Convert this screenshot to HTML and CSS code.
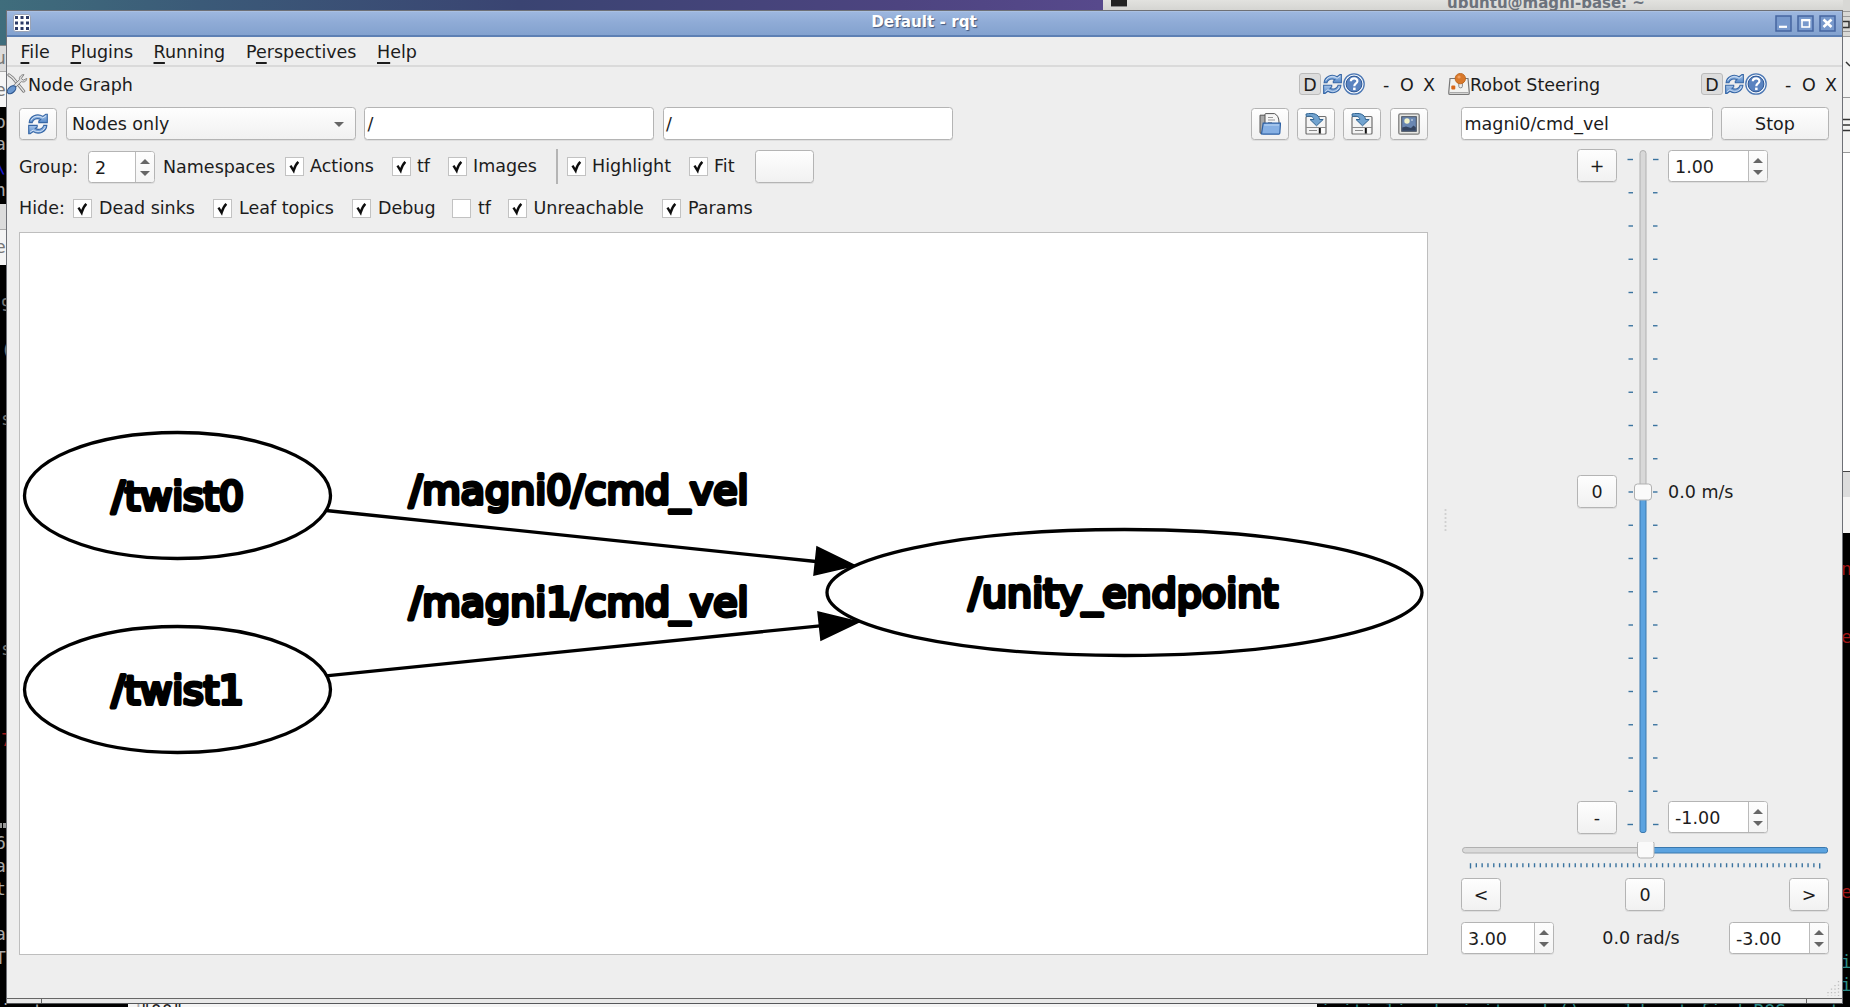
FILE: index.html
```html
<!DOCTYPE html>
<html lang="en">
<head>
<meta charset="utf-8">
<title>Default - rqt</title>
<link rel="stylesheet" href="styles.css">
</head>
<body>
<svg class="defs" width="0" height="0" aria-hidden="true">
  <defs>
    <linearGradient id="blue" x1="0" y1="0" x2="0" y2="1"><stop offset="0" stop-color="#a9c6ea"/><stop offset="1" stop-color="#5488c8"/></linearGradient>
    <symbol id="refresh" viewBox="0 0 22 22">
      <path d="M2.2 9.6C2.5 3.5 10 -.2 15.800 3.400L18.800 1.200 20.300 1.200 20.300 9.600 11.800 9.600 11.800 8 13.600 6.500C10.200 4.600 6 6.200 5.200 9.600Z" fill="url(#blue)" stroke="#3767a6" stroke-width="1.100"/>
      <path d="M19.800 12.400C19.500 18.500 12 22.200 6.200 18.600L3.200 20.800 1.700 20.800 1.700 12.400 10.200 12.400 10.200 14 8.400 15.500C11.800 17.400 16 15.800 16.800 12.400Z" fill="url(#blue)" stroke="#3767a6" stroke-width="1.100"/>
      <path d="M4 7.500C6.500 2.600 12 2.400 15.800 5L19 2.800M18 14.500C15.500 19.400 10 19.600 6.200 17L3 19.200" fill="none" stroke="#dfeaf8" stroke-width=".9"/>
    </symbol>
    <symbol id="help" viewBox="0 0 22 22">
      <circle cx="11" cy="11" r="10.200" fill="#f3f7fc" stroke="#4a76b3" stroke-width="1.300"/>
      <circle cx="11" cy="11" r="7.900" fill="#5a83c0" stroke="#2a5594" stroke-width="1"/>
      <path d="M7.800 8.300C7.900 4.400 14.600 4.500 14.400 8.200C14.300 10.500 11.300 10.500 11.300 13.200" fill="none" stroke="#fff" stroke-width="2.200"/>
      <rect x="10.100" y="14.600" width="2.500" height="2.500" fill="#fff"/>
    </symbol>
    <symbol id="tools" viewBox="0 0 22 22">
      <path d="M2 1.500L6 4.500 17.500 18.500" fill="none" stroke="#777" stroke-width="3.200" stroke-linecap="round"/>
      <path d="M2 1.500L6 4.500 17.500 18.500" fill="none" stroke="#e6e6e6" stroke-width="1.500" stroke-linecap="round"/>
      <path d="M17.800 1.200L15 5.200 17 7 20.700 5.200C20.500 8.500 17.500 9.500 15.200 8.500L8 15.500 5.800 13.300 13 6.500C12.500 3.500 15 1 17.800 1.200Z" fill="#dedede" stroke="#777" stroke-width=".9"/>
      <ellipse cx="4.800" cy="17" rx="5.200" ry="3.200" transform="rotate(-42 4.800 17)" fill="#6b98d0" stroke="#2e578f" stroke-width="1.100"/>
    </symbol>
    <symbol id="joystick" viewBox="0 0 22 22">
      <path d="M2 5.500H20L21.200 18.500V20.500Q21.200 21.400 20 21.400H2Q.8 21.400 .8 20.500V18.500Z" fill="#f2f2f0" stroke="#777" stroke-width="1.200"/>
      <path d="M1.500 19.500H20.500" stroke="#aaa"/>
      <rect x="10.800" y="9" width="3.600" height="5.800" rx="1.500" fill="#eee" stroke="#888"/>
      <circle cx="12.300" cy="5.600" r="5.200" fill="#d9792b" stroke="#b85c10" stroke-width=".8"/>
      <circle cx="11" cy="4" r="1.600" fill="#efa061"/>
      <rect x="3.300" y="12.400" width="4" height="4" rx="1" fill="#d9681a"/>
    </symbol>
    <symbol id="open" viewBox="0 0 22 22">
      <path d="M1 2.200H7L9 4V20.500H2Q1 20.500 1 19Z" fill="#a9a9a9" stroke="#555"/>
      <path d="M6 12V1.200Q6 .6 7 .6H15.500Q19.800 2.500 20 9V12Z" fill="#f7f7f7" stroke="#555"/>
      <path d="M9 4.500H14M9 7H16M9 9.500H13" stroke="#999"/>
      <path d="M4.200 10.200H21.500L20.800 20.300Q20.700 21.200 19.800 21.200H4.500L2.500 21Z" fill="#86b0e4" stroke="#2f62a5" stroke-width="1.200"/>
      <path d="M5.200 12H20" stroke="#bdd7f3"/>
    </symbol>
    <symbol id="save" viewBox="0 0 22 22">
      <path d="M1.500 3.500H20Q21 3.500 21 4.500V20Q21 21 20 21H2Q1 21 1 20V4.500Z" fill="#f4f4f4" stroke="#707070" stroke-width="1.200"/>
      <path d="M1 14.500H21M4 17.500H12" stroke="#8a8a8a"/>
      <path d="M14.800 15V20.500" stroke="#111" stroke-width="2"/>
      <path d="M16.500 15V20.500H19.500V15Z" fill="#fff"/>
      <path d="M1 1C8 -.6 14 1 14.500 6.500H18.200L11.500 12.800 5 6.500H8.800C8.500 3.500 5.500 2.700 1.300 3.500Z" fill="#72a3cf" stroke="#2f6391"/>
    </symbol>
    <symbol id="image" viewBox="0 0 22 22">
      <rect x=".8" y=".8" width="20.400" height="20.400" rx="1.500" fill="#e8e8e4" stroke="#7c7c7c" stroke-width="1.300"/>
      <rect x="3.700" y="3.700" width="14.600" height="14.600" fill="#6a87b2" stroke="#454e5b"/>
      <path d="M4.200 14.500L8 13.500 13 15 15.500 12.500 17.800 14.500V17.800H4.200Z" fill="#34445f"/>
      <circle cx="9" cy="8" r="2.700" fill="#f1f2c8"/>
      <circle cx="14" cy="7" r="1" fill="#b6c7da"/>
    </symbol>
    <symbol id="tick" viewBox="0 0 19 19">
      <path d="M5 8.600L8.500 14.300C9.500 10.500 11 7 13.800 4.300" fill="none" stroke="#0d0d0d" stroke-width="2.700"/>
    </symbol>
  </defs>
</svg>

<!-- Windows behind the main one -->
<div class="peek peek-title"><svg width="16" height="8" viewBox="0 0 16 8"><rect width="16" height="7" fill="#222"/><rect y="6" width="16" height="1" fill="#888"/></svg><span>ubuntu@magni-base: ~</span></div>
<div class="peek peek-left">
  <span class="g dark" style="top:46px">u</span><span class="g dark" style="top:78px">e</span>
  <span class="g" style="top:110px">o</span><span class="g" style="top:132px">a</span><span class="g blue" style="top:155px">\</span><span class="g" style="top:178px">h</span>
  <span class="g dark" style="top:235px">e</span>
  <span class="g dim half" style="top:293px">9</span><span class="g dim half" style="top:338px">(</span><span class="g dim half" style="top:407px">s</span>
  <span class="g dim half" style="top:637px">s</span><span class="g red half" style="top:728px">7</span>
  <i class="dash"></i><span class="g" style="top:831px">6</span><span class="g" style="top:854px">a</span><span class="g" style="top:877px">t</span><span class="g" style="top:922px">a</span><span class="g" style="top:946px">T</span>
</div>
<div class="peek peek-right">
  <svg width="7" height="160" viewBox="0 0 7 160"><path d="M0 11.500H7M0 16.500H7M0 31.500H7M0 36.500H7M0 97.500H7M0 152.500H7" stroke="#999"/><path d="M0 21.500H6V27.500H0M3 62L7 66M0 119.500H7M0 125H7M0 130.500H7" fill="none" stroke="#333" stroke-width="1.500"/></svg>
  <span class="g red" style="top:557px">n</span><span class="g red" style="top:625px">e</span><span class="g red" style="top:880px">e</span>
  <span class="g cyan" style="top:950px">i</span><span class="g cyan" style="top:973px">i</span>
</div>
<div class="peek peek-bottom"><span class="b1">in to command</span><span class="b2">"00"</span><span class="b3">initialized, init_node() could not find ROS master</span></div>

<div class="window">
  <header class="titlebar">
    <svg class="appicon" width="18" height="18" viewBox="0 0 18 18"><rect x=".5" y=".5" width="17" height="17" rx="2.500" fill="#fff" stroke="#9aa3b5"/><g fill="#2c3a66"><rect x="2" y="2" width="3" height="3"/><rect x="7.500" y="2" width="3" height="3"/><rect x="13" y="2" width="3" height="3"/><rect x="2" y="7.500" width="3" height="3"/><rect x="7.500" y="7.500" width="3" height="3"/><rect x="13" y="7.500" width="3" height="3"/><rect x="2" y="13" width="3" height="3"/><rect x="7.500" y="13" width="3" height="3"/><rect x="13" y="13" width="3" height="3"/></g></svg>
    <span class="title">Default - rqt</span>
    <span class="winbtns">
      <svg width="17" height="17" viewBox="0 0 17 17"><rect x="1" y="1" width="15" height="15" fill="#7899cc" stroke="#4565a0" stroke-width="1.500"/><path d="M4 11.800H12" stroke="#fff" stroke-width="2.200"/></svg>
      <svg width="17" height="17" viewBox="0 0 17 17"><rect x="1" y="1" width="15" height="15" fill="#7899cc" stroke="#4565a0" stroke-width="1.500"/><rect x="5" y="5.500" width="7.500" height="6.500" fill="none" stroke="#fff" stroke-width="1.600"/><path d="M4.200 5H13.300" stroke="#fff" stroke-width="2"/></svg>
      <svg width="17" height="17" viewBox="0 0 17 17"><rect x="1" y="1" width="15" height="15" fill="#7899cc" stroke="#4565a0" stroke-width="1.500"/><path d="M4.500 4.500L12.500 12M12.500 4.500L4.500 12" stroke="#fff" stroke-width="2.600"/></svg>
    </span>
  </header>
  <nav class="menubar">
    <span class="m1"><u>F</u>ile</span><span class="m2"><u>P</u>lugins</span><span class="m3"><u>R</u>unning</span><span class="m4">P<u>e</u>rspectives</span><span class="m5"><u>H</u>elp</span>
  </nav>
  <main class="docks">
    <section class="dock graph-dock">
      <div class="dock-title">
        <svg width="21" height="22"><use href="#tools"/></svg><span class="name">Node Graph</span>
        <span class="dbtn">D</span><svg width="21" height="22"><use href="#refresh"/></svg><svg width="22" height="22"><use href="#help"/></svg>
        <span class="c1">-</span><span class="c2">O</span><span class="c3">X</span>
      </div>
      <div class="row toolbar">
        <span class="btn tool"><svg width="22" height="22"><use href="#refresh"/></svg></span>
        <span class="btn combo">Nodes only<i class="down"></i></span>
        <span class="field wide">/</span>
        <span class="field wide">/</span>
        <span class="tools">
          <span class="btn tool"><svg width="22" height="22"><use href="#open"/></svg></span>
          <span class="btn tool"><svg width="22" height="22"><use href="#save"/></svg></span>
          <span class="btn tool"><svg width="22" height="22"><use href="#save"/></svg></span>
          <span class="btn tool"><svg width="22" height="22"><use href="#image"/></svg></span>
        </span>
      </div>
      <div class="row options">
        <span class="lbl group">Group:</span>
        <span class="spin s-group"><b>2</b><i><em class="up"></em><em class="down"></em></i></span>
        <span class="lbl ns">Namespaces</span>
        <span class="check k-actions"><svg><use href="#tick"/></svg>Actions</span>
        <span class="check k-tf"><svg><use href="#tick"/></svg>tf</span>
        <span class="check k-images"><svg><use href="#tick"/></svg>Images</span>
        <span class="vline"></span>
        <span class="check k-high"><svg><use href="#tick"/></svg>Highlight</span>
        <span class="check k-fit"><svg><use href="#tick"/></svg>Fit</span>
        <span class="btn blank"></span>
      </div>
      <div class="row hides">
        <span class="lbl hide">Hide:</span>
        <span class="check k-dead"><svg><use href="#tick"/></svg>Dead sinks</span>
        <span class="check k-leaf"><svg><use href="#tick"/></svg>Leaf topics</span>
        <span class="check k-debug"><svg><use href="#tick"/></svg>Debug</span>
        <span class="check k-tf2"><svg></svg>tf</span>
        <span class="check k-unre"><svg><use href="#tick"/></svg>Unreachable</span>
        <span class="check"><svg><use href="#tick"/></svg>Params</span>
      </div>
      <svg class="canvas" width="1407" height="721" viewBox="20 233 1407 721">
        <g fill="none" stroke="#000" stroke-width="3.300">
          <ellipse cx="177.500" cy="495.500" rx="153" ry="63"/>
          <ellipse cx="177.500" cy="689.500" rx="153" ry="63"/>
          <ellipse cx="1124.500" cy="592.500" rx="297.500" ry="63"/>
          <path d="M326 510.500L816 561.500M326 675.800L820 625.800"/>
        </g>
        <path d="M817 547L855 565.500L814 575ZM818 612L859 622L821 640Z" stroke="#000" stroke-width="1.500"/>
        <g class="node-text">
          <text x="111.500" y="509.500" textLength="132.500">/twist0</text>
          <text x="111.500" y="703.700" textLength="132.500">/twist1</text>
          <text x="409" y="504.300" textLength="339.500">/magni0/cmd_vel</text>
          <text x="409" y="615.800" textLength="339.500">/magni1/cmd_vel</text>
          <text x="968.500" y="606.700" textLength="309.500">/unity_endpoint</text>
        </g>
      </svg>
    </section>
    <div class="splitter"></div>
    <section class="dock steer-dock">
      <div class="dock-title">
        <svg width="22" height="22"><use href="#joystick"/></svg><span class="name">Robot Steering</span>
        <span class="dbtn">D</span><svg width="21" height="22"><use href="#refresh"/></svg><svg width="22" height="22"><use href="#help"/></svg>
        <span class="c1">-</span><span class="c2">O</span><span class="c3">X</span>
      </div>
      <div class="row topic"><span class="field">magni0/cmd_vel</span><span class="btn stop">Stop</span></div>
      <div class="linear">
        <div class="col"><span class="btn sq">+</span><span class="btn sq">0</span><span class="btn sq">-</span></div>
        <svg id="vslider" width="39" height="685" viewBox="1624 149 39 685">
          <rect x="1640" y="150.500" width="6" height="340" rx="3" fill="#d8d8d8" stroke="#b0b0b0"/>
          <rect x="1640" y="495" width="6" height="337.500" rx="2" fill="#5ba3e0" stroke="#3a78ae"/>
          <rect x="1634.500" y="484" width="17" height="16" rx="3" fill="#fafafa" stroke="#b1b1b1"/>
        </svg>
        <div class="col vals">
          <span class="spin"><b>1.00</b><i><em class="up"></em><em class="down"></em></i></span>
          <span class="lbl">0.0 m/s</span>
          <span class="spin"><b>-1.00</b><i><em class="up"></em><em class="down"></em></i></span>
        </div>
      </div>
      <svg id="hslider" width="370" height="28" viewBox="1460 842 370 28">
        <rect x="1462.500" y="847.500" width="180" height="5.500" rx="2.700" fill="#dadada" stroke="#b0b0b0"/>
        <rect x="1645" y="847.500" width="182.500" height="5.500" rx="2" fill="#5ba3e0" stroke="#3a78ae"/>
        <rect x="1637.500" y="840.500" width="16.500" height="17.500" rx="3" fill="#fafafa" stroke="#b1b1b1"/>
      </svg>
      <div class="row turn"><span class="btn sq">&lt;</span><span class="btn sq">0</span><span class="btn sq">&gt;</span></div>
      <div class="row angular">
        <span class="spin s3"><b>3.00</b><i><em class="up"></em><em class="down"></em></i></span>
        <span class="lbl">0.0 rad/s</span>
        <span class="spin"><b>-3.00</b><i><em class="up"></em><em class="down"></em></i></span>
      </div>
    </section>
  </main>
  <footer class="statusbar"><svg width="16" height="16" viewBox="0 0 16 16"><path d="M13.500 1V16M10 5V16M6.500 8.500V16M3 12V16" stroke="#bdbdbd" stroke-width="1.300" stroke-dasharray="1.300 2.200"/></svg></footer>
  <div class="handle"><span></span><span></span><span></span></div>
</div>
<script src="ticks.js"></script>
</body>
</html>
```
FILE: styles.css
```css
* { box-sizing: border-box; }
html, body { margin: 0; height: 1007px; overflow: hidden; }
body {
  position: relative;
  width: 1850px;
  font: 17.5px/20px "DejaVu Sans", sans-serif;
  color: #1c1c1c;
  background: linear-gradient(90deg, #3f6d7c 0, #3b5a78 200px, #3a4472 520px, #4d4480 900px, #57498c 1100px);
}
svg { display: block; flex: none; }
.defs { position: absolute; }

/* background windows */
.peek { position: absolute; overflow: hidden; white-space: nowrap; }
.peek-title {
  left: 1103px; top: 0; width: 747px; height: 10px;
  background: linear-gradient(#e2e2df, #d5d5d2);
  color: #6c727c; font: bold 15px/16px "DejaVu Sans", sans-serif;
  display: flex; padding-left: 8px;
}
.peek-title span { margin: -5px 0 0 320px; }
.peek-left {
  left: 0; top: 45px; width: 6px; height: 962px;
  background: linear-gradient(#888 0 1px, #dcdcdc 1px 26px, #aaa 26px 27px, #f6f6f6 27px 62px, #000 62px 159px, #dcdcdc 159px 184px, #aaa 184px 185px, #f4f4f4 185px 220px, #000 220px);
}
.peek-left .g { margin-top: -45px; left: -5px; }
.peek-left .half { left: 1px; }
.dash { position: absolute; left: 0; top: 778px; width: 6px; height: 5px; background: linear-gradient(90deg, #999 2px, #000 2px 3px, #999 3px); }
.peek-right {
  left: 1843px; top: 0; width: 7px; height: 1007px;
  background: linear-gradient(#d8d8d5 0 37px, #f4f4f3 37px 152px, #fff 152px 471px, #444 471px 472px, #dcdcdc 472px 497px, #f6f5f4 497px 533px, #000 533px);
}
.g { position: absolute; left: -2px; font: 18px/24px "DejaVu Sans Mono", monospace; color: #a8a8a8; }
.g.dark { color: #777; } .g.dim { color: #777; } .g.red { color: #a01515; } .g.cyan { color: #2b8a86; } .g.blue { color: #1a1ad0; }
.peek-bottom {
  left: 0; top: 1003px; width: 1850px; height: 4px;
  font: 18px/20px "DejaVu Sans Mono", monospace; color: #aaa;
  background: linear-gradient(90deg, #000 0 128px, #f5f5f5 128px 1317px, #000 1317px);
  display: flex;
}
.peek-bottom span { flex: none; overflow: hidden; height: 20px; margin-top: -2px; }
.b1 { width: 140px; } .b2 { width: 1180px; color: #222; } .b3 { color: #2b8a86; }

/* main window */
.window {
  position: absolute; left: 6px; top: 10px; width: 1837px; height: 994px;
  border: 1px solid #6e7076; border-bottom: 1px solid #55575a; background: #eee;
  display: flex; flex-direction: column;
}
.titlebar {
  height: 26px; flex: none; display: grid; grid-template-columns: 67px 1fr 67px; align-items: center;
  background: linear-gradient(#9db7df, #8fabd6 45%, #83a2cf);
  border-top: 1px solid #aac0e2; border-bottom: 2px solid #5d80b4;
}
.appicon { margin: -1px 0 0 6px; }
.title { text-align: center; color: #fff; font-weight: bold; font-size: 15.200px; text-shadow: 1px 1px 1px #44587c; margin-top: -3px; padding-right: 1px; }
.winbtns { display: flex; gap: 5px; margin-top: -1px; }
.menubar { height: 30px; flex: none; display: flex; align-items: center; padding: 1px 0 0 13.500px; border-bottom: 2px solid #dadada; }
.menubar u { text-decoration-thickness: 1.500px; text-underline-offset: 4px; }
.m1 { width: 50px; } .m2 { width: 83px; } .m3 { width: 92.500px; } .m4 { width: 131px; }
.docks { height: 889px; flex: none; display: flex; }
.dock { display: flex; flex-direction: column; flex: none; }
.graph-dock { width: 1431px; }
.splitter { width: 10px; margin-top: 441px; height: 24px; background: radial-gradient(circle, #d0d0d0 30%, transparent 55%) 6px 0 / 3px 4px repeat-y; }
.steer-dock { width: 394px; }
.dock-title { height: 22px; margin-top: 6px; display: flex; align-items: center; flex: none; white-space: nowrap; }
.dock-title .name { flex: 1; padding-top: 2px; }
.dbtn { width: 22px; height: 22px; border: 1px solid #bbb; border-radius: 3px; background: #ddd; text-align: center; line-height: 22px; margin-right: 1px; }
.c1, .c2, .c3 { padding-top: 2px; }
.c1 { margin-left: 18px; width: 17px; } .c2 { width: 23px; } .c3 { width: 15px; }
.steer-dock .c3 { width: 17px; }
.row { display: flex; align-items: center; flex: none; white-space: nowrap; }
.btn, .field, .spin { border: 1px solid #b4b4b4; border-radius: 3.500px; box-shadow: 0 1px 0 #dedede; display: flex; align-items: center; flex: none; }
.btn { background: linear-gradient(#fefefe, #f1f1f1); justify-content: center; }
.field { background: #fff; padding: 1px 0 0 2.500px; height: 33px; }
.tool { width: 38px; height: 32px; }
.toolbar { margin: 12px 0 0 12px; height: 33px; gap: 8.500px; }
.combo { width: 290px; height: 33px; justify-content: space-between; padding: 1px 11px 0 5.500px; }
.field.wide { width: 290px; }
.tools { display: flex; gap: 8.300px; margin-left: auto; margin-right: 10.300px; }
.up, .down { width: 0; height: 0; border: 5px solid transparent; }
.up { border-top: 0; border-bottom-color: #666; }
.down { border-bottom: 0; border-top-color: #666; }
.options { margin: 9px 0 0 12px; height: 34px; }
.lbl { flex: none; }
.group { width: 69px; padding-top: 2px; }
.ns { width: 122px; padding-top: 2px; }
.spin { width: 100px; height: 32px; background: #fff; overflow: hidden; }
.spin b { flex: 1; font-weight: normal; padding-left: 6px; padding-top: 2px; }
.spin i { width: 19px; height: 100%; border-left: 1px solid #bbb; background: linear-gradient(#fdfdfd, #f4f4f4); display: flex; flex-direction: column; justify-content: center; align-items: center; gap: 7px; }
.s-group { width: 66.500px; margin-right: 8.500px; margin-top: 2px; }
.s3 { width: 93px; }
.check { display: flex; align-items: center; gap: 6px; flex: none; }
.check svg { width: 19px; height: 19px; background: #fff; border: 1px solid #c2c2c2; }
.k-actions { width: 107px; } .k-tf { width: 56px; } .k-images { width: 107.500px; }
.vline { width: 11.500px; height: 35px; border-left: 2px solid #b4b4b4; }
.k-high { width: 122px; } .k-fit { width: 66px; }
.blank { width: 59px; height: 33px; }
.hides { margin: 14px 0 0 12px; height: 22px; }
.hide { width: 54px; }
.hides .check { gap: 7px; }
.k-dead { width: 140px; } .k-leaf { width: 139px; } .k-debug { width: 100px; } .k-tf2 { width: 55.500px; } .k-unre { width: 154.500px; }
.canvas { margin: 13px 0 0 12px; width: 1409px; height: 723px; background: #fff; border: 1px solid #bebebe; }
.node-text { font: 39.500px "DejaVu Sans", sans-serif; stroke: #000; stroke-width: 4px; stroke-linejoin: round; }

/* steering */
.topic { margin: 12px 13px 0 13px; justify-content: space-between; }
.topic .field { width: 252px; }
.stop { width: 108px; height: 33px; padding-top: 1px; }
.linear { display: flex; margin: 9px 0 0 129px; height: 685px; }
.col { display: flex; flex-direction: column; justify-content: space-between; }
.sq { width: 40px; height: 33px; }
#vslider { margin-left: 7px; }
.vals { margin-left: 5px; padding: 1px 0; }
#hslider { margin: 8px 0 0 12px; }
.turn { margin: 8px 13px 0; justify-content: space-between; }
.angular { margin: 11px 13px 0; justify-content: space-between; }
.angular .lbl { margin-right: 1px; }
.statusbar { height: 42px; flex: none; display: flex; justify-content: flex-end; align-items: flex-end; padding: 0 1px 2px 0; }
.handle { flex: 1; display: flex; border-top: 1px solid #666; background: #e8e8e8; }
.handle span { border-right: 1.500px solid #666; width: 35px; }
.handle span:nth-child(2) { flex: 1; }
.handle span:last-child { border: 0; }
```
FILE: ticks.js
```js
// Tick marks along the two sliders, drawn at their even spacing.
function addTick(svg, x1, y1, x2, y2, width) {
  const line = document.createElementNS("http://www.w3.org/2000/svg", "line");
  line.setAttribute("x1", x1);
  line.setAttribute("y1", y1);
  line.setAttribute("x2", x2);
  line.setAttribute("y2", y2);
  line.setAttribute("stroke", "#3a739f");
  line.setAttribute("stroke-width", width);
  svg.appendChild(line);
}

const vertical = document.getElementById("vslider");
for (let i = 0; i <= 20; i++) {
  const y = 159.5 + i * 33.25;
  const extra = i === 0 || i === 20 ? 1 : 0;
  addTick(vertical, 1628.5 - extra, y, 1633, y, 1.4);
  addTick(vertical, 1653, y, 1657.5 + extra, y, 1.4);
}

const horizontal = document.getElementById("hslider");
for (let i = 0; i <= 60; i++) {
  const x = 1470.5 + i * 5.82;
  addTick(horizontal, x, 863.2, x, i === 0 || i === 60 ? 868.5 : 867.3, 1.4);
}
```
